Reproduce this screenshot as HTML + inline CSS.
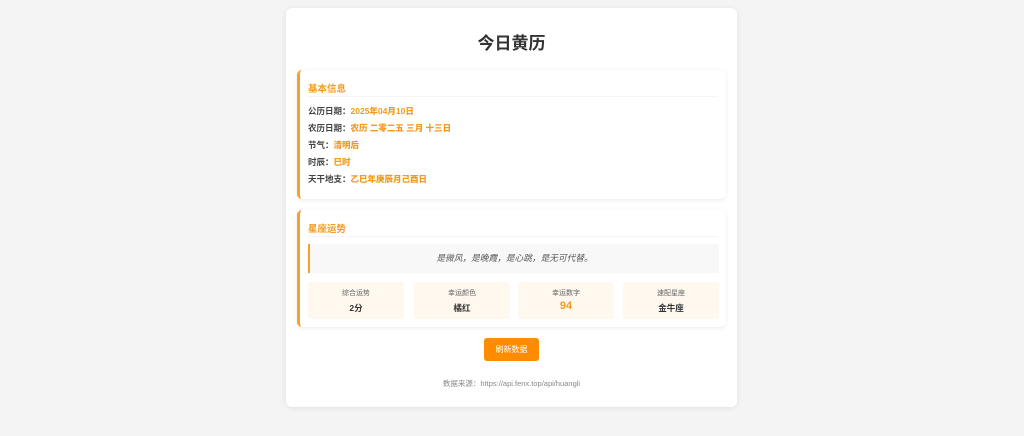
<!DOCTYPE html><html><head><meta charset="utf-8"><style>
*{box-sizing:border-box;margin:0;padding:0}
body{width:1024px;height:436px;background:#f4f4f4;font-family:"Liberation Sans","Noto Sans CJK SC",sans-serif;position:relative;overflow:hidden}
.card{position:absolute;left:286px;top:8px;width:451px;height:399px;background:#fff;border-radius:6px;box-shadow:0 1px 6px rgba(0,0,0,.08)}
h1{position:absolute;top:26px;width:100%;text-align:center;font-size:17px;line-height:20px;font-weight:bold;color:#333}
.sec{position:absolute;left:11px;width:429px;background:#fff;border-left:3px solid #f7a02a;border-radius:5px;box-shadow:0 1px 4px rgba(0,0,0,.08)}
.st{position:absolute;left:8px;font-size:9.5px;font-weight:bold;color:#f39a1e}
.hr{position:absolute;left:8px;right:8px;height:1px;background:#f5f5f5}
.row{position:absolute;left:8px;font-size:8.5px;font-weight:bold;color:#444;line-height:10px}
.row b{color:#f39a1e}
.quote{position:absolute;left:8px;top:34px;width:411px;height:29px;background:#f8f8f8;border-left:2px solid #f7a02a;text-align:center;line-height:29px;font-size:8.7px;font-style:italic;color:#555}
.box{position:absolute;top:72px;height:37px;background:#fff8ee;border-radius:3px;text-align:center}
.box .l{font-size:7px;color:#666;margin-top:6px}
.box .v{font-size:8.5px;font-weight:bold;color:#333;margin-top:4px}
.btn{position:absolute;left:198px;top:330px;width:55px;height:23px;background:#ff8c00;border-radius:3px;color:#fff;font-size:8px;text-align:center;line-height:23px}
.foot{position:absolute;top:370px;width:100%;text-align:center;font-size:7.5px;color:#888}
</style></head><body><div class="card">
<h1>今日黄历</h1>
<div class="sec" style="top:62px;height:129px">
<div class="st" style="top:11px">基本信息</div><div class="hr" style="top:26px"></div>
<div class="row" style="top:36px">公历日期：<b>2025年04月10日</b></div>
<div class="row" style="top:53px">农历日期：<b>农历 二零二五 三月 十三日</b></div>
<div class="row" style="top:70px">节气：<b>清明后</b></div>
<div class="row" style="top:87px">时辰：<b>巳时</b></div>
<div class="row" style="top:104px">天干地支：<b>乙巳年庚辰月己酉日</b></div>
</div>
<div class="sec" style="top:202px;height:117px">
<div class="st" style="top:11px">星座运势</div><div class="hr" style="top:26px"></div>
<div class="quote">是微风，是晚霞，是心跳，是无可代替。</div>
<div class="box" style="left:8px;width:96px"><div class="l">综合运势</div><div class="v">2分</div></div>
<div class="box" style="left:114px;width:96px"><div class="l">幸运颜色</div><div class="v">橘红</div></div>
<div class="box" style="left:218px;width:96px"><div class="l">幸运数字</div><div class="v" style="color:#f39a1e;font-size:11px;margin-top:2px">94</div></div>
<div class="box" style="left:323px;width:96px"><div class="l">速配星座</div><div class="v">金牛座</div></div>
</div>
<div class="btn">刷新数据</div>
<div class="foot">数据来源：https://api.fenx.top/api/huangli</div>
</div></body></html>
